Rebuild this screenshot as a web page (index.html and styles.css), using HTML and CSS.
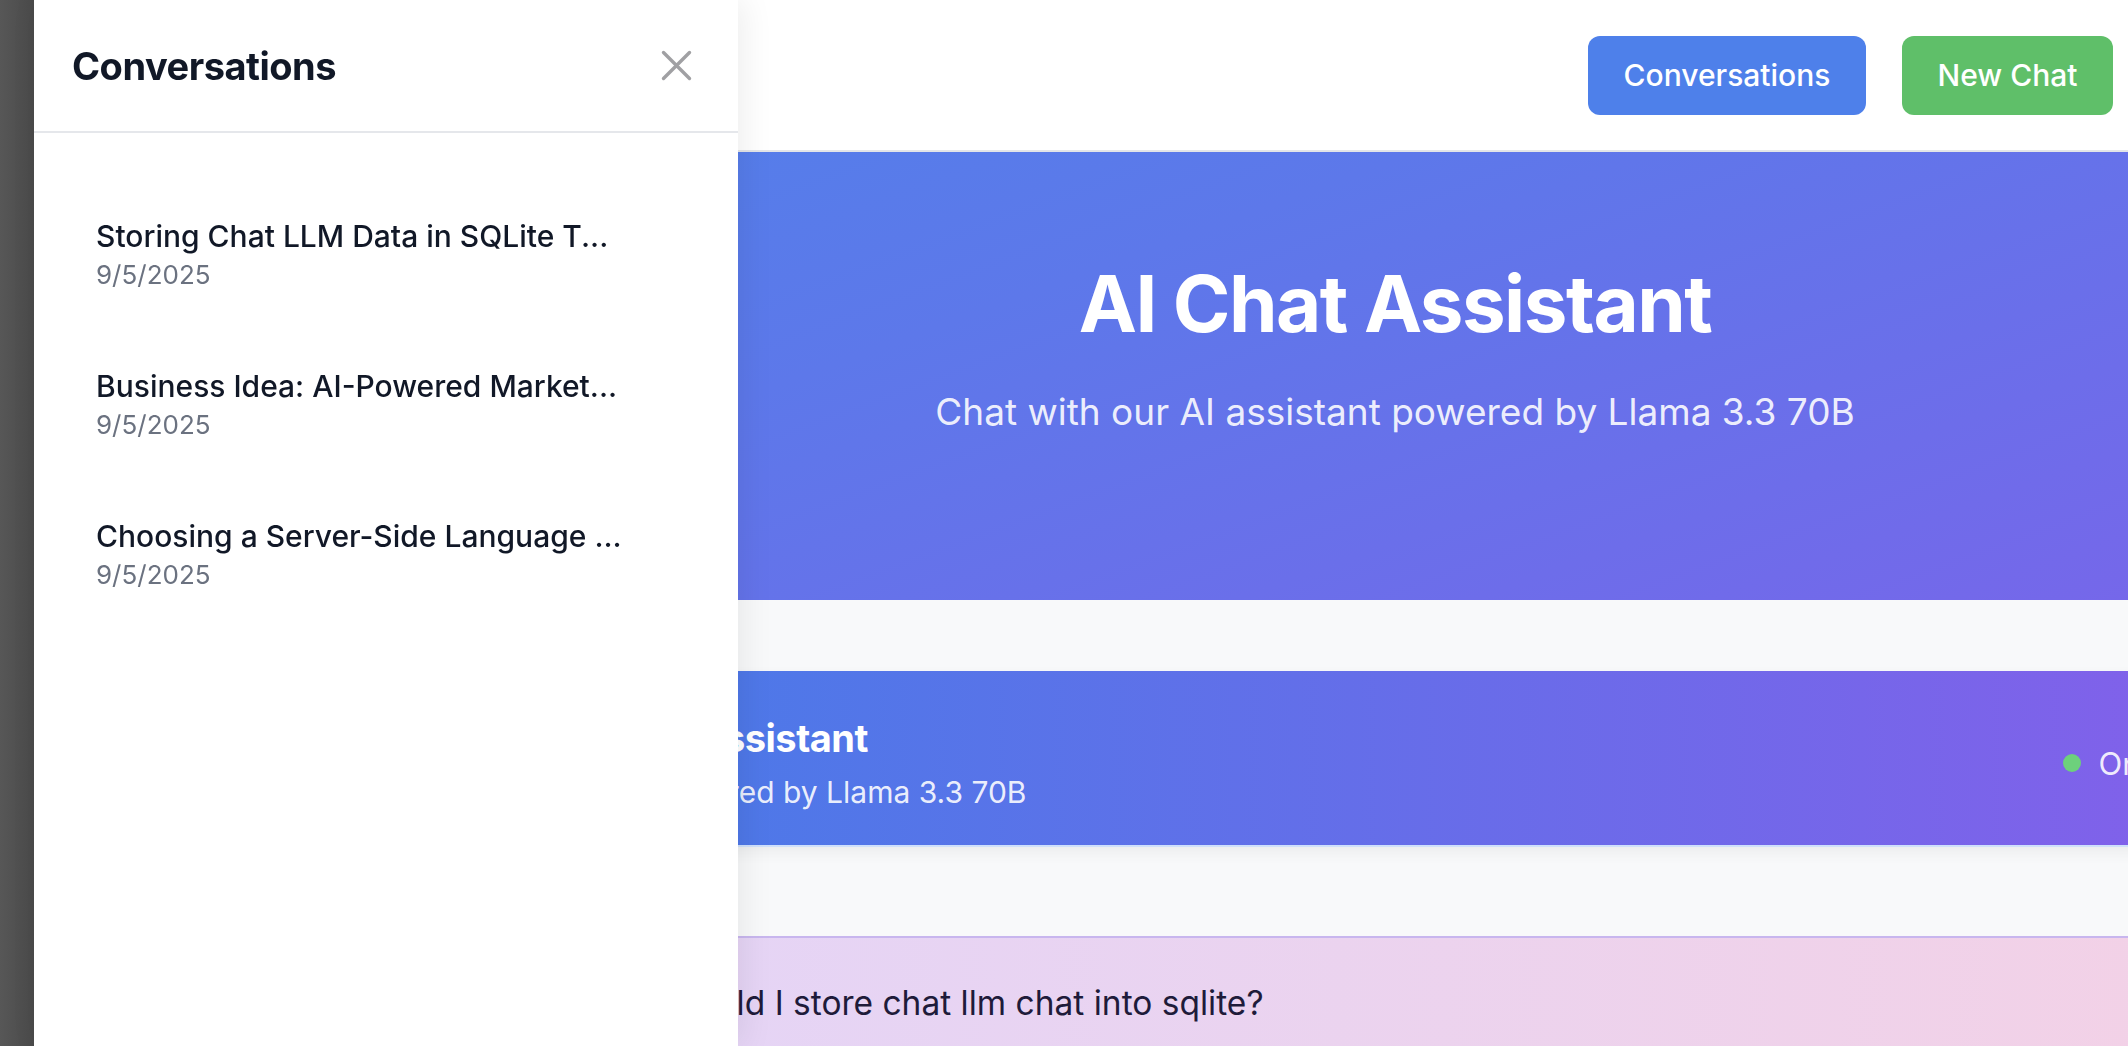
FILE: index.html
```html
<!DOCTYPE html>
<html lang="en">
<head>
<meta charset="utf-8">
<title>AI Chat Assistant</title>
<link rel="stylesheet" href="styles.css">
</head>
<body>
<div class="frame"></div>
<div class="app">
  <header class="topbar">
    <button class="btn btn-blue">Conversations</button>
    <button class="btn btn-green">New Chat</button>
  </header>
  <section class="hero">
    <h1 class="hero-title">AI Chat Assistant</h1>
    <p class="hero-sub">Chat with our AI assistant powered by Llama 3.3 70B</p>
  </section>
  <main class="chat-area">
    <div class="chat-card">
      <div class="chat-head">
        <div class="chat-id">
          <h2 class="chat-name">AI Assistant</h2>
          <p class="chat-model">Powered by Llama 3.3 70B</p>
        </div>
        <div class="status"><span class="dot"></span>Online</div>
      </div>
      <div class="messages">
        <div class="msg-user">How should I store chat llm chat into sqlite?</div>
      </div>
    </div>
  </main>
</div>
<aside class="drawer">
  <div class="drawer-head">
    <h2 class="drawer-title">Conversations</h2>
    <button class="close" aria-label="Close">
      <svg width="31" height="31" viewBox="0 0 31 31"><path d="M2.5 2.5 L28.5 28.5 M28.5 2.5 L2.5 28.5" stroke="#a0a0a3" stroke-width="3.4" stroke-linecap="round" fill="none"/></svg>
    </button>
  </div>
  <ul class="conv-list">
    <li class="conv-item">
      <div class="conv-title">Storing Chat LLM Data in SQLite T...</div>
      <div class="conv-date">9/5/2025</div>
    </li>
    <li class="conv-item">
      <div class="conv-title">Business Idea: AI-Powered Market...</div>
      <div class="conv-date">9/5/2025</div>
    </li>
    <li class="conv-item">
      <div class="conv-title">Choosing a Server-Side Language ...</div>
      <div class="conv-date">9/5/2025</div>
    </li>
  </ul>
</aside>
</body>
</html>
```
FILE: styles.css
```css
* { box-sizing: border-box; }
html, body {
  margin: 0;
  height: 1046px;
  overflow: hidden;
}
body {
  display: flex;
  font-family: Inter, "Noto Sans", "DejaVu Sans", sans-serif;
  background: #f8f9fa;
  color: #111827;
}
.frame {
  flex: none;
  width: 34px;
  height: 100%;
  background: linear-gradient(90deg, #575757, #4a4a4a);
}
.app {
  flex: none;
  width: 2094px;
  display: flex;
  flex-direction: column;
  background: #f8f9fa;
}
.topbar {
  flex: none;
  height: 152px;
  background: #ffffff;
  border-bottom: 2px solid #e3e5e8;
  display: flex;
  align-items: center;
  justify-content: flex-end;
  gap: 36px;
  padding: 0 15px 0 0;
}
.btn {
  height: 79px;
  border: 0;
  border-radius: 12px;
  color: #ffffff;
  font-family: Inter, "Noto Sans", sans-serif;
  font-size: 30px;
  font-weight: 500;
  padding: 0;
}
.btn-blue { width: 278px; background: #4e80ea; }
.btn-green { width: 211px; background: #5fbf69; }

.hero {
  flex: none;
  width: 2722px;
  height: 448px;
  padding-top: 105px;
  text-align: center;
  color: #ffffff;
  background: linear-gradient(160deg, #4f82ea 0%, #5d78ea 35%, #7d62ea 100%);
}
.hero-title {
  margin: 0;
  font-size: 78px;
  line-height: 94px;
  font-weight: 700;
  letter-spacing: -1.5px;
}
.hero-sub {
  margin: 39px 0 0;
  font-size: 37px;
  line-height: 44px;
  font-weight: 400;
  color: rgba(255, 255, 255, 0.9);
}

.chat-area {
  flex: 1;
  width: 2722px;
  padding-top: 71px;
}
.chat-card {
  margin-left: 576px;
  width: 1622px;
}
.chat-head {
  display: flex;
  align-items: center;
  justify-content: space-between;
  padding: 45px 40px 35px;
  background: linear-gradient(90deg, #4a7ae8 0%, #8360ea 100%);
  border-bottom: 2px solid #cfe0fb;
  box-shadow: 0 6px 14px rgba(0, 0, 0, 0.05);
  color: #ffffff;
}
.chat-name {
  margin: 0;
  font-size: 38px;
  line-height: 45px;
  font-weight: 700;
  letter-spacing: -0.5px;
}
.chat-model {
  margin: 14px 0 0;
  font-size: 30px;
  line-height: 35px;
  color: rgba(255, 255, 255, 0.9);
}
.status {
  display: flex;
  align-items: center;
  gap: 18px;
  font-size: 31px;
  color: rgba(255, 255, 255, 0.9);
}
.dot {
  width: 18px;
  height: 18px;
  border-radius: 50%;
  background: #6dd07c;
}
.messages {
  padding-top: 89px;
}
.msg-user {
  margin-left: -60px;
  border-top: 2px solid #c8b6ee;
  background: linear-gradient(90deg, #e4d5f7 0%, #f3d1e6 100%);
  padding: 45px 60px 40px 28px;
  font-size: 33.5px;
  line-height: 40px;
  color: #1e1b3a;
  height: 200px;
}

.drawer {
  position: fixed;
  left: 34px;
  top: 0;
  width: 704px;
  height: 1046px;
  background: #ffffff;
  box-shadow: 6px 0 30px rgba(0, 0, 0, 0.07);
  z-index: 10;
}
.drawer-head {
  height: 133px;
  border-bottom: 2px solid #e5e7eb;
  display: flex;
  align-items: center;
  justify-content: space-between;
  padding: 0 46px 0 38px;
}
.drawer-title {
  margin: 0;
  font-size: 38px;
  font-weight: 700;
  color: #111827;
  letter-spacing: -0.5px;
}
.close {
  width: 31px;
  height: 31px;
  padding: 0;
  border: 0;
  background: none;
  display: block;
}
.close svg { display: block; }
.conv-list {
  list-style: none;
  margin: 0;
  padding: 47px 0 0;
}
.conv-item {
  padding: 38px 24px 39px 62px;
}
.conv-title {
  font-size: 30px;
  line-height: 36px;
  font-weight: 500;
  color: #111827;
  white-space: nowrap;
}
.conv-date {
  margin-top: 5px;
  font-size: 26px;
  line-height: 32px;
  color: #6b7280;
}
```
